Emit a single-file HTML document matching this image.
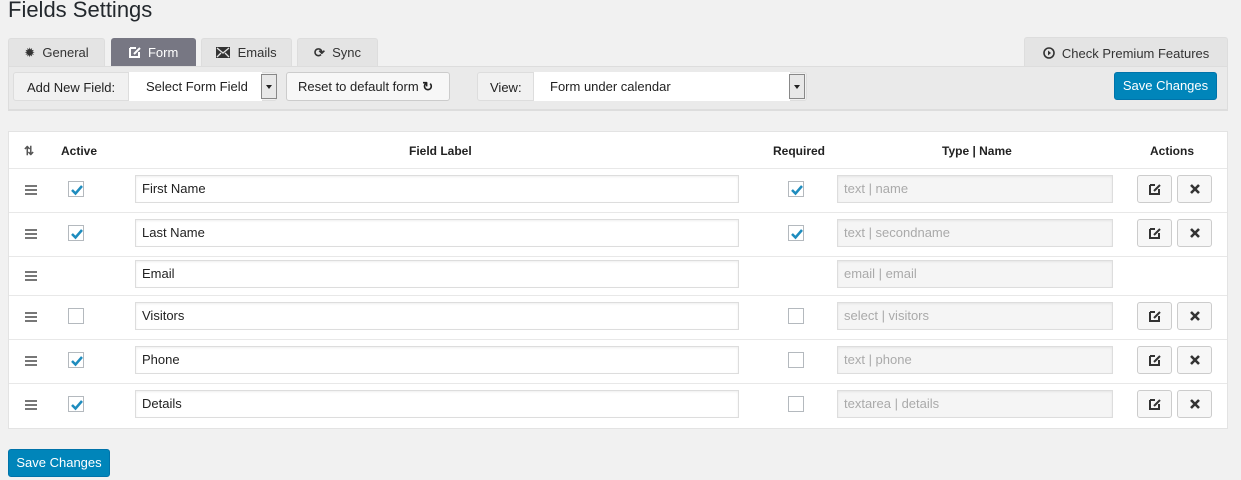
<!DOCTYPE html>
<html><head><style>
*{box-sizing:border-box}
body{margin:0;background:#f1f1f1;font-family:"Liberation Sans",sans-serif;font-size:13px;color:#222;width:1241px;height:480px;overflow:hidden;position:relative}
.abs{position:absolute}
h1{position:absolute;left:8px;top:-3px;margin:0;font-weight:400;font-size:22px;color:#23282d}
.tab{position:absolute;top:38px;height:29px;background:#e4e4e4;border:1px solid #ddd;border-bottom:none;border-radius:3px 3px 0 0;color:#333;font-size:13px;line-height:28px;text-align:center}
.tab.on{background:#777783;color:#fff;border-color:#777783}
.bar{position:absolute;left:8px;top:66px;width:1220px;height:45px;background:#eaeaea;border:1px solid #ddd;border-bottom:2px solid #ddd}
.grp{position:absolute;top:5px;height:29px;border:1px solid #ddd;border-radius:3px;background:#f1f1f1}
.btn{position:absolute;background:#f7f7f7;border:1px solid #ccc;border-radius:3px}
.blue{position:absolute;background:#0085ba;border:1px solid #0073aa;border-radius:3px;color:#fff;text-align:center;line-height:26px}
.panel{position:absolute;left:8px;top:131px;width:1220px;height:298px;background:#fff;border:1px solid #e3e3e3}
.row{position:absolute;left:0;width:1218px;border-top:1px solid #e8e8e8}
.th{position:absolute;top:12px;font-weight:bold;font-size:12px;color:#222}
.inp{position:absolute;height:28px;border:1px solid #ddd;line-height:26px;padding-left:6px;box-shadow:inset 0 1px 2px rgba(0,0,0,.07)}
.dis{background:#f5f5f5;color:#aaa}
.cb{position:absolute;width:16px;height:16px;border:1px solid #b4b9be;background:#fff}
.cb svg{position:absolute;left:1px;top:1px}
.ham{position:absolute;left:16px;width:12px;height:10px;border-top:2px solid #777;border-bottom:2px solid #777}
.ham:after{content:"";position:absolute;left:0;top:2px;width:12px;height:2px;background:#777}
.ab{position:absolute;width:35px;height:28px;background:#f7f7f7;border:1px solid #ccc;border-radius:3px;text-align:center}
.sel{position:absolute;width:16px;height:25px;top:1px;background:#e8e8e8;border:1px solid #888}
.sel:after{content:"";position:absolute;left:4px;top:10px;border:3px solid transparent;border-top:4px solid #222}
</style></head><body>
<h1>Fields Settings</h1>
<div class="tab" style="left:8px;width:97px"><span style="font-size:13px">✹</span>&nbsp; General</div>
<div class="tab on" style="left:111px;width:85px"><svg width="12" height="12" style="vertical-align:-1px"><path d="M1 2h6M1 2v9h9V6" stroke="#fff" stroke-width="2" fill="none"/><path d="M5 8l6-6" stroke="#fff" stroke-width="2"/></svg>&nbsp; Form</div>
<div class="tab" style="left:201px;width:91px"><svg width="14" height="11" style="vertical-align:-1px"><rect x="0" y="0" width="14" height="11" fill="#333"/><path d="M1 1l6 5 6-5M1 10l4-4M13 10l-4-4" stroke="#e4e4e4" stroke-width="1.3" fill="none"/></svg>&nbsp; Emails</div>
<div class="tab" style="left:297px;width:81px"><b>⟳</b>&nbsp; Sync</div>
<div class="tab" style="left:1024px;width:204px;top:37px;height:30px;line-height:31px"><svg width="12" height="12" style="vertical-align:-1px"><circle cx="6" cy="6" r="5" stroke="#333" stroke-width="1.6" fill="none"/><path d="M5 3.5v5l3-2.5z" fill="#333"/></svg>&nbsp; Check Premium Features</div>
<div class="bar">
 <div class="grp" style="left:4px;width:264px"><span class="abs" style="left:13px;top:7px">Add New Field:</span>
  <div class="abs" style="left:114px;top:-1px;width:134px;height:29px;background:#fff;border-left:1px solid #ddd"><span class="abs" style="left:17px;top:7px">Select Form Field</span></div>
  <div class="sel" style="left:247px"></div></div>
 <div class="btn" style="left:277px;top:5px;width:164px;height:29px;line-height:27px;padding-left:11px">Reset to default form <b>↻</b></div>
 <div class="grp" style="left:468px;width:330px"><span class="abs" style="left:12px;top:7px">View:</span>
  <div class="abs" style="left:55px;top:-1px;width:257px;height:29px;background:#fff;border-left:1px solid #ddd"><span class="abs" style="left:16px;top:7px">Form under calendar</span></div>
  <div class="sel" style="left:311px"></div></div>
 <div class="blue" style="left:1105px;top:5px;width:103px;height:28px">Save Changes</div>
</div>
<div class="panel">
 <span class="th" style="left:15px;color:#555">⇅</span>
 <span class="th" style="left:52px">Active</span>
 <span class="th" style="left:400px">Field Label</span>
 <span class="th" style="left:764px">Required</span>
 <span class="th" style="left:933px">Type | Name</span>
 <span class="th" style="left:1141px">Actions</span>
</div>
<script>
var rows=[["First Name",1,1,"text | name",1,44],["Last Name",1,1,"text | secondname",1,44],["Email",0,-1,"email | email",0,39],["Visitors",0,0,"select | visitors",1,44],["Phone",1,0,"text | phone",1,44],["Details",1,0,"textarea | details",1,44]];
var y=36,h="",ck='<svg width="14" height="14"><path d="M2 7l3.5 3.5L12 3" stroke="#1e8cbe" stroke-width="2.5" fill="none"/></svg>';
rows.forEach(function(r){var H=r[5],m=Math.floor((H-28)/2)-2,c=H/2-2;
h+='<div class="row" style="top:'+y+'px;height:'+H+'px">'+
'<div class="ham" style="top:'+(c-4)+'px"></div>'+
(r[0]=="Email"?'':'<div class="cb" style="left:59px;top:'+(c-8)+'px">'+(r[1]?ck:'')+'</div>')+
'<div class="inp" style="left:126px;top:'+m+'px;width:604px">'+r[0]+'</div>'+
(r[2]<0?'':'<div class="cb" style="left:779px;top:'+(c-8)+'px">'+(r[2]?ck:'')+'</div>')+
'<div class="inp dis" style="left:828px;top:'+m+'px;width:276px">'+r[3]+'</div>'+
(r[4]?'<div class="ab" style="left:1128px;top:'+m+'px"><svg width="12" height="12" style="margin-top:7px"><path d="M1 2h5M1 2v9h9V6" stroke="#333" stroke-width="2" fill="none"/><path d="M5 8l6-6" stroke="#333" stroke-width="2"/></svg></div><div class="ab" style="left:1168px;top:'+m+'px"><svg width="10" height="10" style="margin-top:8px"><path d="M1 1l8 8M9 1l-8 8" stroke="#333" stroke-width="2.6"/></svg></div>':'')+
'</div>';y+=H;});
var c=document.createElement('div');c.className='abs';c.style.cssText='left:9px;top:132px;width:1218px';c.innerHTML=h;document.body.appendChild(c);
</script>
<div class="blue" style="left:8px;top:449px;width:102px;height:28px">Save Changes</div>
</body></html>
